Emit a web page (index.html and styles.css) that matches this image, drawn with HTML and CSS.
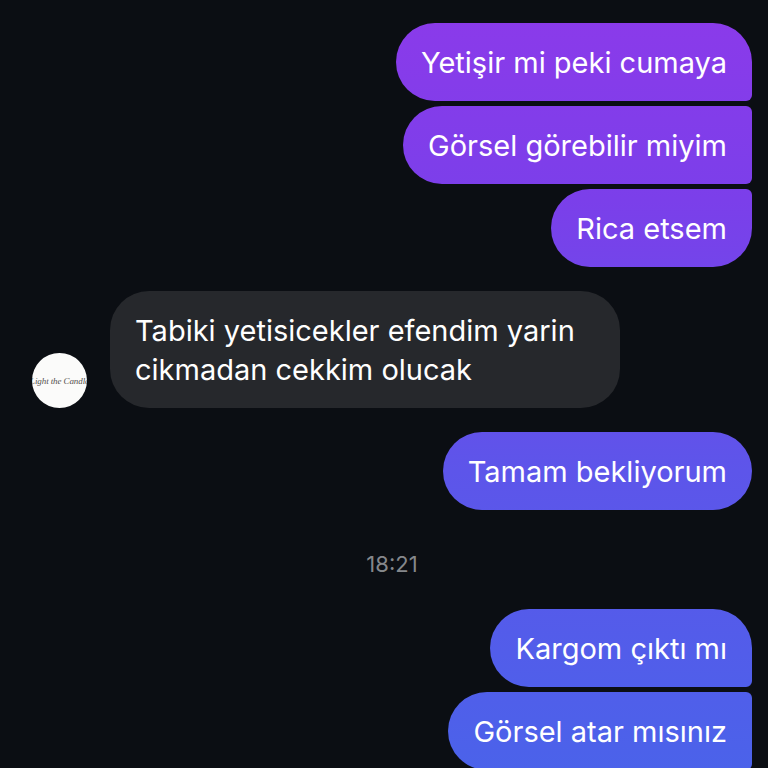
FILE: index.html
```html
<!DOCTYPE html>
<html lang="tr">
<head>
<meta charset="utf-8">
<title>Sohbet</title>
<link rel="stylesheet" href="styles.css">
</head>
<body>
<main class="chat">
  <div class="group group-out">
    <div class="bubble out">Yetişir mi peki cumaya</div>
    <div class="bubble out">Görsel görebilir miyim</div>
    <div class="bubble out last">Rica etsem</div>
  </div>
  <div class="row-in">
    <div class="avatar"><span class="logo">Light the Candle</span></div>
    <div class="bubble in">Tabiki yetisicekler efendim yarin cikmadan cekkim olucak</div>
  </div>
  <div class="group group-out">
    <div class="bubble out single">Tamam bekliyorum</div>
  </div>
  <div class="time">18:21</div>
  <div class="group group-out">
    <div class="bubble out">Kargom çıktı mı</div>
    <div class="bubble out">Görsel atar mısınız</div>
  </div>
</main>
</body>
</html>
```

FILE: styles.css
```css
html, body {
  margin: 0;
  height: 100%;
  background: #0b0e13;
  overflow: hidden;
}

.chat {
  display: flex;
  flex-direction: column;
  padding: 23px 16px 0 32px;
  font-family: Inter, "Liberation Sans", sans-serif;
  font-size: 29px;
  line-height: 39px;
  color: #fff;
}

.group {
  display: flex;
  flex-direction: column;
  gap: 5px;
}

.group-out {
  align-items: flex-end;
}

.bubble {
  box-sizing: border-box;
  padding: 19.5px 25px;
}

.out {
  border-radius: 39px 39px 6px 39px;
  background: linear-gradient(180deg, #8c3aea 0, #7b3fea 200px, #5d55ea 470px, #4b62ea 768px) fixed;
}

.out + .out {
  border-top-right-radius: 6px;
}

.out.last {
  border-radius: 39px 6px 39px 39px;
}

.out.single {
  border-radius: 39px;
}

.row-in {
  display: flex;
  align-items: flex-end;
  gap: 23px;
  margin: 24px 0;
}

.in {
  width: 510px;
  background: #26282c;
  border-radius: 39px;
}

.avatar {
  flex: none;
  width: 55px;
  height: 55px;
  margin-bottom: 0;
  border-radius: 50%;
  background: #fbfbfa;
  display: flex;
  align-items: center;
  justify-content: center;
  overflow: hidden;
}

.logo {
  font-family: "Liberation Serif", serif;
  font-style: italic;
  font-size: 9px;
  line-height: 12px;
  letter-spacing: -0.1px;
  color: #55524f;
  white-space: nowrap;
}

.time {
  margin: 39px 0 30px;
  text-align: center;
  font-size: 22px;
  line-height: 30px;
  color: #85878b;
  transform: translateX(0);
}
```
